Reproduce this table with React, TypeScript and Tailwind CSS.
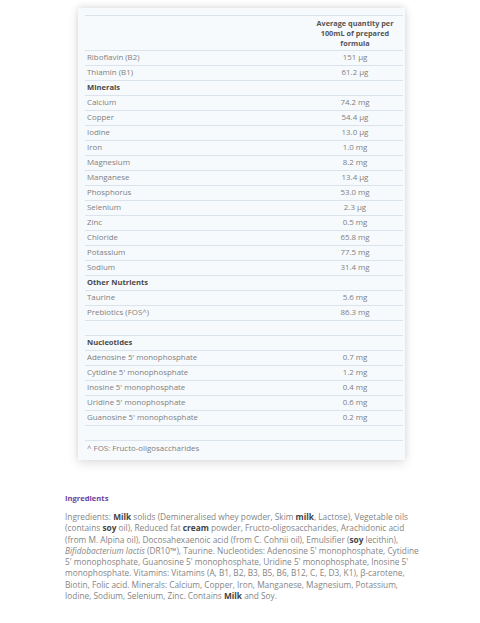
const rows: { label: string; value?: string; head?: boolean; empty?: boolean }[] = [
  { label: 'Riboflavin (B2)', value: '151 µg' },
  { label: 'Thiamin (B1)', value: '61.2 µg' },
  { label: 'Minerals', head: true },
  { label: 'Calcium', value: '74.2 mg' },
  { label: 'Copper', value: '54.4 µg' },
  { label: 'Iodine', value: '13.0 µg' },
  { label: 'Iron', value: '1.0 mg' },
  { label: 'Magnesium', value: '8.2 mg' },
  { label: 'Manganese', value: '13.4 µg' },
  { label: 'Phosphorus', value: '53.0 mg' },
  { label: 'Selenium', value: '2.3 µg' },
  { label: 'Zinc', value: '0.5 mg' },
  { label: 'Chloride', value: '65.8 mg' },
  { label: 'Potassium', value: '77.5 mg' },
  { label: 'Sodium', value: '31.4 mg' },
  { label: 'Other Nutrients', head: true },
  { label: 'Taurine', value: '5.6 mg' },
  { label: 'Prebiotics (FOS^)', value: '86.3 mg' },
  { label: '', empty: true },
  { label: 'Nucleotides', head: true },
  { label: "Adenosine 5' monophosphate", value: '0.7 mg' },
  { label: "Cytidine 5' monophosphate", value: '1.2 mg' },
  { label: "Inosine 5' monophosphate", value: '0.4 mg' },
  { label: "Uridine 5' monophosphate", value: '0.6 mg' },
  { label: "Guanosine 5' monophosphate", value: '0.2 mg' },
  { label: '', empty: true },
];

const font = { fontFamily: '"Open Sans", Lato, sans-serif' };
const strong = 'font-bold text-[#444]';

export default function App() {
  return (
    <div className="w-[480px] h-[623px] bg-white overflow-hidden" style={font}>
      <div className="ml-[78px] mt-[8px] w-[327px] bg-[#f7fafd] pt-[7px] pl-[7px] pr-[2px] pb-[4px] shadow-[0_3px_10px_rgba(0,0,0,0.13),0_-2px_6px_rgba(0,0,0,0.08)]">
        <div className="flex h-[36px] border-t border-b border-[#dbe4ec]">
          <div className="flex-1" />
          <div className="w-[96px] flex items-center justify-center text-center text-[7.3px] leading-[10px] font-bold text-[#555]">
            Average quantity per
            <br />
            100mL of prepared
            <br />
            formula
          </div>
        </div>
        {rows.map((r, i) => (
          <div key={i} className="flex h-[15px] items-center border-b border-[#dbe4ec] text-[7.9px]">
            <div className={r.head ? 'flex-1 pl-[2px] text-[7.6px] font-bold text-[#4a4a4a]' : 'flex-1 pl-[2px] text-[#808080]'}>{r.label}</div>
            <div className="w-[96px] text-center text-[#808080]">{r.value}</div>
          </div>
        ))}
        <div className="h-[15px] flex items-center pl-[2px] text-[7.9px] text-[#808080]">^ FOS: Fructo-oligosaccharides</div>
      </div>

      <div className="ml-[65px] mt-[33px] text-[#858585]">
        <div className="text-[7.6px] font-bold text-[#6b3fa0] leading-[11px]">Ingredients</div>
        <p className="mt-[7px] text-[8.3px] leading-[11.3px] whitespace-nowrap">
          Ingredients: <b className={strong}>Milk</b> solids (Demineralised whey powder, Skim <b className={strong}>milk</b>, Lactose), Vegetable oils
          <br />
          (contains <b className={strong}>soy</b> oil), Reduced fat <b className={strong}>cream</b> powder, Fructo-oligosaccharides, Arachidonic acid
          <br />
          (from M. Alpina oil), Docosahexaenoic acid (from C. Cohnii oil), Emulsifier (<b className={strong}>soy</b> lecithin),
          <br />
          <i>Bifidobacterium lactis</i> (DR10™), Taurine. Nucleotides: Adenosine 5' monophosphate, Cytidine
          <br />
          5' monophosphate, Guanosine 5' monophosphate, Uridine 5' monophosphate, Inosine 5'
          <br />
          monophosphate. Vitamins: Vitamins (A, B1, B2, B3, B5, B6, B12, C, E, D3, K1), β-carotene,
          <br />
          Biotin, Folic acid. Minerals: Calcium, Copper, Iron, Manganese, Magnesium, Potassium,
          <br />
          Iodine, Sodium, Selenium, Zinc. Contains <b className={strong}>Milk</b> and Soy.
        </p>
      </div>
    </div>
  );
}
